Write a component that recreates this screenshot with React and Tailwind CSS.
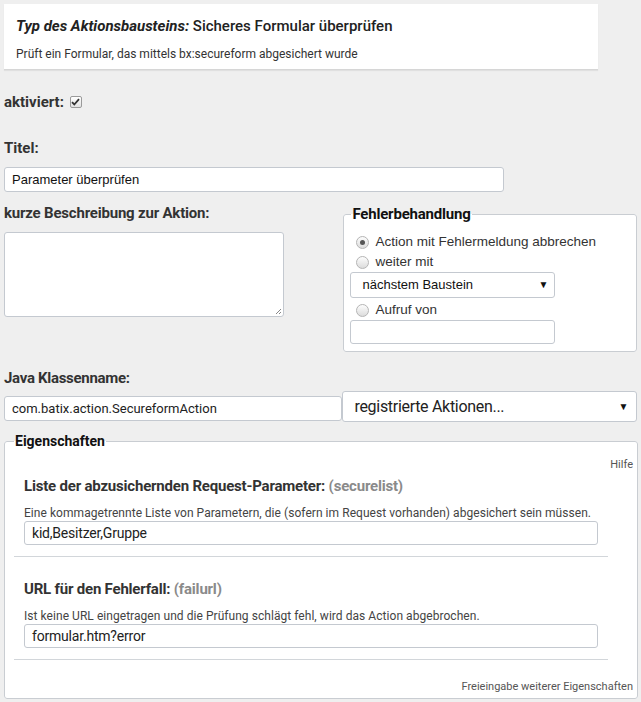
import React from 'react';

const fieldBox = 'bg-white border border-[#c4c9d0] rounded-[3px]';

const Radio = ({ checked, label }) => (
  <label className="flex items-center gap-[6px] h-[20px] text-[13.5px] text-[#333] font-['Liberation_Sans',Arial,sans-serif]">
    <span className="w-[13px] h-[13px] rounded-full border border-[#b5b5b5] bg-gradient-to-b from-[#fdfdfd] to-[#dcdcdc] flex items-center justify-center">
      {checked && <span className="w-[5px] h-[5px] rounded-full bg-[#555]" />}
    </span>
    {label}
  </label>
);

const Caret = () => <span className="text-[10px] text-[#111] leading-none">▼</span>;

const Property = ({ title, name, hint, value }) => (
  <div className="pl-[19px] pr-[39px]">
    <h3 className="text-[15px] font-bold text-[#333] tracking-[-0.2px] leading-[20px] mb-[9px]">
      {title} <span className="text-[#8a8a8a]">({name})</span>
    </h3>
    <p className="text-[12px] text-[#444] leading-[16px] tracking-[0.05px]">{hint}</p>
    <div className={`${fieldBox} h-[24px] flex items-center px-[7px] text-[14px] text-[#222] tracking-[-0.2px]`}>
      {value}
    </div>
  </div>
);

const App = () => {
  return (
    <div className="w-[641px] h-[702px] overflow-hidden bg-[#efefef] text-[#333] font-['Roboto',sans-serif] px-[4px] pt-[4px]">
      {/* Kopf */}
      <div className="w-[594px] h-[66px] bg-white border-b border-[#d6d6d6] shadow-[0_1px_1px_rgba(0,0,0,0.06)] px-[12px] pt-[12px]">
        <h1 className="text-[15px] font-bold text-[#222] leading-[20px]">
          <i>Typ des Aktionsbausteins:</i> <span className="font-medium">Sicheres Formular überprüfen</span>
        </h1>
        <p className="text-[12px] text-[#333] mt-[10px] leading-[16px]">Prüft ein Formular, das mittels bx:secureform abgesichert wurde</p>
      </div>

      <div className="flex items-center gap-[6px] mt-[22px] h-[20px]">
        <span className="text-[15px] font-bold">aktiviert:</span>
        <span className="w-[12px] h-[12px] border border-[#9a9a9a] rounded-[2px] bg-gradient-to-b from-white to-[#e2e2e2] flex items-center justify-center">
          <svg width="9" height="8" viewBox="0 0 9 8"><path d="M1 4.2l2.3 2.3L8 1.2" fill="none" stroke="#333" strokeWidth="1.8" /></svg>
        </span>
      </div>

      <div className="text-[15px] font-bold mt-[26px] h-[20px] leading-[20px]">Titel:</div>
      <div className={`${fieldBox} w-[500px] h-[25px] mt-[9px] flex items-center px-[7px] text-[13px] text-[#111] font-['Liberation_Sans',Arial,sans-serif]`}>
        Parameter überprüfen
      </div>

      <div className="flex mt-[13px]">
        <div className="w-[340px]">
          <div className="text-[15px] font-bold tracking-[-0.2px] leading-[16px]">kurze Beschreibung zur Aktion:</div>
          <div className={`${fieldBox} w-[280px] h-[85px] mt-[11px] relative`}>
            <svg className="absolute right-[1px] bottom-[1px]" width="8" height="8" viewBox="0 0 8 8">
              <path d="M7 2L2 7M7 5L5 7" stroke="#888" strokeWidth="1" />
            </svg>
          </div>
        </div>
        <fieldset className="w-[294px] border border-[#c9cdd2] rounded-[3px] bg-white px-[6px] pb-[7px]">
          <legend className="ml-[1px] px-[1px] text-[15px] font-bold text-[#111] leading-[18px] tracking-[-0.2px]">Fehlerbehandlung</legend>
          <div className="pl-[6px] mt-[9px]">
            <Radio checked label="Action mit Fehlermeldung abbrechen" />
            <Radio label="weiter mit" />
          </div>
          <div className={`${fieldBox} w-[205px] h-[26px] flex items-center justify-between pl-[11px] pr-[6px] text-[13px] text-[#111] font-['Liberation_Sans',Arial,sans-serif]`}>
            nächstem Baustein <Caret />
          </div>
          <div className="pl-[6px] mt-[2px]">
            <Radio label="Aufruf von" />
          </div>
          <div className={`${fieldBox} w-[205px] h-[24px]`} />
        </fieldset>
      </div>

      <div className="text-[15px] font-bold tracking-[-0.3px] mt-[16px] h-[20px] leading-[20px]">Java Klassenname:</div>
      <div className="flex items-start mt-[3px]">
        <div className={`${fieldBox} w-[339px] h-[25px] mt-[5px] flex items-center px-[7px] text-[13px] text-[#222]`}>
          com.batix.action.SecureformAction
        </div>
        <div className={`${fieldBox} w-[295px] h-[31px] flex items-center justify-between pl-[11px] pr-[8px] text-[16px] text-[#222] tracking-[-0.3px]`}>
          registrierte Aktionen... <Caret />
        </div>
      </div>

      {/* Eigenschaften */}
      <fieldset className="w-[634px] h-[267px] mt-[10px] border border-[#c9cdd2] rounded-[3px] bg-white px-0">
        <legend className="ml-[9px] px-[1px] text-[14px] font-bold text-[#111] leading-[18px]">Eigenschaften</legend>
        <div className="text-right text-[11px] text-[#555] mr-[4px] mt-[8px] leading-[14px]">Hilfe</div>
        <div className="mt-[4px]">
          <Property
            title="Liste der abzusichernden Request-Parameter:"
            name="securelist"
            hint="Eine kommagetrennte Liste von Parametern, die (sofern im Request vorhanden) abgesichert sein müssen."
            value="kid,Besitzer,Gruppe"
          />
        </div>
        <div className="h-px bg-[#d2d6da] ml-[9px] mr-[29px] mt-[11px]" />
        <div className="mt-[22px]">
          <Property
            title="URL für den Fehlerfall:"
            name="failurl"
            hint="Ist keine URL eingetragen und die Prüfung schlägt fehl, wird das Action abgebrochen."
            value="formular.htm?error"
          />
        </div>
        <div className="h-px bg-[#d2d6da] ml-[9px] mr-[29px] mt-[11px]" />
        <div className="text-right text-[11px] text-[#555] mr-[4px] mt-[20px] leading-[14px]">Freieingabe weiterer Eigenschaften</div>
      </fieldset>
    </div>
  );
};

export default App;
